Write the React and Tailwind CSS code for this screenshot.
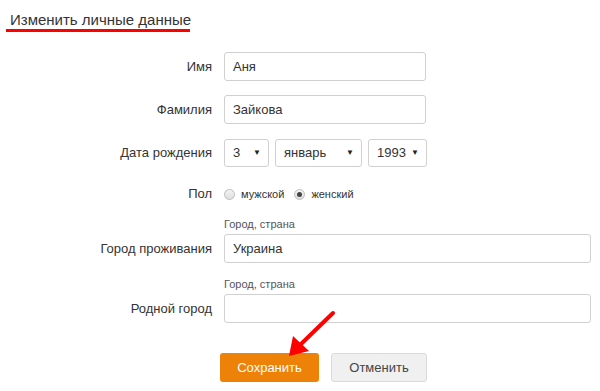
import { useState } from 'react'

function Field({ label, value, wide }) {
  return (
    <div className="flex items-center">
      <div className="w-[212px] shrink-0 pr-0 text-right text-[13px] text-[#333]">{label}</div>
      <div
        className={`ml-3 h-[29px] ${wide ? 'w-[367px]' : 'w-[202px]'} rounded-[3px] border border-[#d0d0d0] bg-white px-[8px] flex items-center text-[13px] text-[#333]`}
      >
        {value}
      </div>
    </div>
  )
}

function Select({ value, width }) {
  return (
    <div
      className={`${width} h-[28px] rounded-[3px] border border-[#d0d0d0] bg-white pl-[8px] pr-[7px] flex items-center justify-between text-[13px] text-[#333]`}
    >
      <span>{value}</span>
      <span className="text-[8px] text-[#222]">▼</span>
    </div>
  )
}

function Radio({ checked, label }) {
  return (
    <label className="flex items-center gap-[6px] text-[11px] text-[#333]">
      <span className="w-[11px] h-[11px] rounded-full border border-[#bdbdbd] bg-gradient-to-b from-[#f4f4f4] to-[#dedede] flex items-center justify-center">
        {checked && <span className="w-[5px] h-[5px] rounded-full bg-[#444]" />}
      </span>
      {label}
    </label>
  )
}

function CityField({ label, value }) {
  return (
    <div className="flex items-end">
      <div className="w-[212px] shrink-0 h-[29px] flex items-center justify-end text-[13px] text-[#333]">{label}</div>
      <div className="ml-3 flex flex-col">
        <span className="h-[13px] leading-[13px] text-[11px] text-[#555]">Город, страна</span>
        <div className="mt-[3px] h-[29px] w-[367px] rounded-[3px] border border-[#d0d0d0] bg-white px-[8px] flex items-center text-[13px] text-[#333]">
          {value}
        </div>
      </div>
    </div>
  )
}

export default function App() {
  const [sex] = useState('female')

  return (
    <div className="relative w-[600px] h-[391px] bg-white overflow-hidden font-['Liberation_Sans',Arial,sans-serif]">
      {/* Title */}
      <div className="pt-[10px]">
        <div className="pl-[10px] h-[19px] leading-[19px] text-[15px] text-[#333]">Изменить личные данные</div>
        <div className="ml-[6px] w-[184px] h-[3px] bg-[#ff0000]" />
      </div>

      {/* Form */}
      <div className="mt-[20px] flex flex-col">
        <Field label="Имя" value="Аня" />
        <div className="mt-[14px]">
          <Field label="Фамилия" value="Зайкова" />
        </div>
        <div className="mt-[15px] flex items-center">
          <div className="w-[212px] shrink-0 text-right text-[13px] text-[#333]">Дата рождения</div>
          <div className="ml-3 flex gap-[6px]">
            <Select value="3" width="w-[45px]" />
            <Select value="январь" width="w-[87px]" />
            <Select value="1993" width="w-[59px]" />
          </div>
        </div>
        <div className="mt-[19px] h-[16px] flex items-center">
          <div className="w-[212px] shrink-0 text-right text-[13px] text-[#333]">Пол</div>
          <div className="ml-3 flex items-center gap-[10px]">
            <Radio checked={sex === 'male'} label="мужской" />
            <Radio checked={sex === 'female'} label="женский" />
          </div>
        </div>
        <div className="mt-[16px]">
          <CityField label="Город проживания" value="Украина" />
        </div>
        <div className="mt-[15px]">
          <CityField label="Родной город" value="" />
        </div>

        {/* Buttons */}
        <div className="mt-[30px] pl-[220px] flex gap-[12px]">
          <button className="w-[99px] h-[29px] rounded-[3px] bg-[#ee8208] text-white text-[13px]">Сохранить</button>
          <button className="w-[96px] h-[29px] rounded-[3px] border border-[#dadada] bg-[#f0f0f0] text-[#444] text-[13px]">Отменить</button>
        </div>
      </div>

      {/* Red arrow */}
      <svg className="absolute left-0 top-0" width="600" height="391" viewBox="0 0 600 391">
        <line x1="333" y1="313" x2="300" y2="345" stroke="#ff0000" strokeWidth="4" strokeLinecap="round" />
        <polygon points="289,356 293,336 309,351" fill="#ff0000" />
      </svg>
    </div>
  )
}
